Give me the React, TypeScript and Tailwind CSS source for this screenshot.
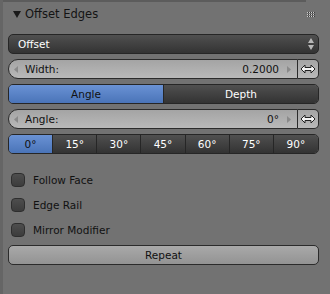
import React from 'react'

const degrees = ['0°', '15°', '30°', '45°', '60°', '75°', '90°']
const checks = ['Follow Face', 'Edge Rail', 'Mirror Modifier']

const SwapIcon = () => (
  <svg width="16" height="10" viewBox="0 0 16 10">
    <path
      d="M1 5 L5 1 L5 3.5 L11 3.5 L11 1 L15 5 L11 9 L11 6.5 L5 6.5 L5 9 Z"
      fill="#f4f4f4"
      stroke="#222"
      strokeWidth="1"
      strokeLinejoin="round"
    />
  </svg>
)

const NumField = ({ label, value }: { label: string; value: string }) => (
  <div className="flex h-[20px]">
    <div className="flex-1 flex items-center rounded-l-full border border-[#2b2b2b] bg-gradient-to-b from-[#a4a4a4] to-[#b9b9b9] pl-[5px] pr-[6px]">
      <svg width="5" height="7" viewBox="0 0 5 7"><path d="M4 0 L0 3.5 L4 7 Z" fill="#8a8a8a" /></svg>
      <span className="ml-[6px] text-[#111]">{label}</span>
      <span className="ml-auto text-[#111]">{value}</span>
      <svg className="ml-[7px]" width="5" height="7" viewBox="0 0 5 7"><path d="M1 0 L5 3.5 L1 7 Z" fill="#8a8a8a" /></svg>
    </div>
    <div className="w-[21px] flex items-center justify-center rounded-r-[5px] border border-l-0 border-[#2b2b2b] bg-gradient-to-b from-[#a4a4a4] to-[#b9b9b9]">
      <SwapIcon />
    </div>
  </div>
)

export default function App() {
  return (
    <div className="w-[330px] h-[294px] bg-[#727272] flex [font-family:'DejaVu_Sans',sans-serif] text-[10.5px] leading-none overflow-hidden">
      <div className="w-[3px] bg-[#656565]" />
      <div className="flex-1 flex flex-col">
        <div className="h-[2px] bg-[#5c5c5c] mr-[24px]" />
        <div className="h-[25px] flex items-center pl-[10px] pr-[16px]">
          <svg width="8" height="7" viewBox="0 0 8 7"><path d="M0 0 L8 0 L4 7 Z" fill="#1a1a1a" /></svg>
          <span className="ml-[4px] text-[11.5px] text-[#141414]">Offset Edges</span>
          <div className="ml-auto grid grid-cols-4 gap-x-[1px] gap-y-[1px]">
            {Array.from({ length: 12 }).map((_, i) => (
              <div key={i} className="w-[1px] h-[1px] bg-[#d0d0d0] shadow-[1px_0_0_#3a3a3a]" />
            ))}
          </div>
        </div>

        <div className="mt-[7px] pl-[5px] pr-[11px] flex flex-col gap-[5px]">
          <div className="h-[20px] flex items-center rounded-[5px] border border-[#262626] bg-gradient-to-b from-[#505050] to-[#333333] pl-[9px] pr-[4px]">
            <span className="text-white">Offset</span>
            <div className="ml-auto flex flex-col gap-[2px]">
              <svg width="6" height="5" viewBox="0 0 6 5"><path d="M3 0 L6 5 L0 5 Z" fill="#b8b8b8" /></svg>
              <svg width="6" height="5" viewBox="0 0 6 5"><path d="M0 0 L6 0 L3 5 Z" fill="#b8b8b8" /></svg>
            </div>
          </div>

          <NumField label="Width:" value="0.2000" />

          <div className="h-[20px] flex rounded-[5px] border border-[#262626] overflow-hidden">
            <div className="flex-1 flex items-center justify-center bg-gradient-to-b from-[#6a92d4] to-[#4a74b8] text-[#111] border-r border-[#262626]">Angle</div>
            <div className="flex-1 flex items-center justify-center bg-gradient-to-b from-[#505050] to-[#333333] text-white">Depth</div>
          </div>

          <NumField label="Angle:" value="0°" />

          <div className="h-[20px] grid grid-cols-7 rounded-[5px] border border-[#262626] overflow-hidden">
            {degrees.map((d, i) => (
              <div
                key={d}
                className={
                  i === 0
                    ? 'flex items-center justify-center bg-gradient-to-b from-[#6a92d4] to-[#4a74b8] text-[#111] border-r border-[#262626]'
                    : i === 6
                    ? 'flex items-center justify-center bg-gradient-to-b from-[#505050] to-[#333333] text-white'
                    : 'flex items-center justify-center bg-gradient-to-b from-[#505050] to-[#333333] text-white border-r border-[#262626]'
                }
              >
                {d}
              </div>
            ))}
          </div>
        </div>

        <div className="mt-[19px] pl-[8px] flex flex-col gap-[11px]">
          {checks.map((c) => (
            <div key={c} className="h-[14px] flex items-center">
              <div className="w-[14px] h-[14px] rounded-[4px] border border-[#2e2e2e] bg-gradient-to-b from-[#4e4e4e] to-[#3c3c3c]" />
              <span className="ml-[8px] text-[#111]">{c}</span>
            </div>
          ))}
        </div>

        <div className="mt-[8px] ml-[5px] mr-[11px] h-[20px] flex items-center justify-center rounded-[5px] border border-[#2b2b2b] bg-gradient-to-b from-[#a9a9a9] to-[#939393] text-[#111]">
          Repeat
        </div>
      </div>
    </div>
  )
}
